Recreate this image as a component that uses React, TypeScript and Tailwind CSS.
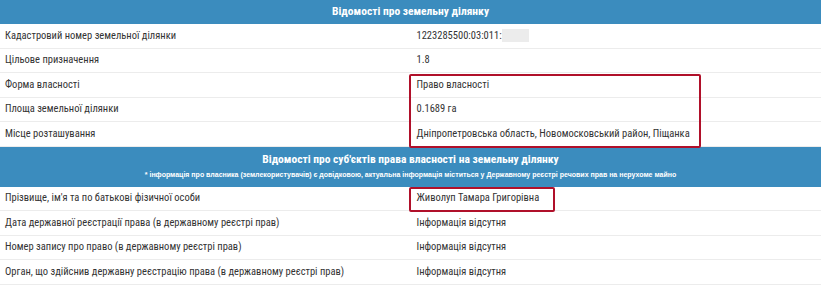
import React from "react";

interface Row {
  label: string;
  value: React.ReactNode;
}

const landRows: Row[] = [
  {
    label: "Кадастровий номер земельної ділянки",
    value: (
      <span className="flex items-center">
        1223285500:03:011:
        <span className="inline-block w-[27px] h-[13px] bg-[#ececec]" />
      </span>
    ),
  },
  { label: "Цільове призначення", value: "1.8" },
];

const boxedRows: Row[] = [
  { label: "Форма власності", value: "Право власності" },
  { label: "Площа земельної ділянки", value: "0.1689 га" },
  {
    label: "Місце розташування",
    value: "Дніпропетровська область, Новомосковський район, Піщанка",
  },
];

const ownerRows: Row[] = [
  {
    label: "Дата державної реєстрації права (в державному реєстрі прав)",
    value: "Інформація відсутня",
  },
  {
    label: "Номер запису про право (в державному реєстрі прав)",
    value: "Інформація відсутня",
  },
  {
    label: "Орган, що здійснив державну реєстрацію права (в державному реєстрі прав)",
    value: "Інформація відсутня",
  },
];

const Line: React.FC<{ row: Row }> = ({ row }) => (
  <div className="grid grid-cols-2 h-[24.5px] border-b border-[#ececec] items-center">
    <div className="pl-[5px] whitespace-nowrap">{row.label}</div>
    <div className="pl-[6px] whitespace-nowrap">{row.value}</div>
  </div>
);

const App: React.FC = () => {
  return (
    <div className="w-[821px] h-[287px] bg-white text-[10.5px] text-[#333] overflow-hidden font-['Roboto_Condensed','Liberation_Sans',sans-serif]">
      <div className="h-[24px] bg-[#3b8cbe] text-white font-bold text-[11.5px] flex items-center justify-center">
        Відомості про земельну ділянку
      </div>

      {landRows.map((r) => (
        <Line key={r.label} row={r} />
      ))}

      <div className="grid grid-cols-2">
        <div>
          {boxedRows.map((r) => (
            <div
              key={r.label}
              className="h-[24.5px] border-b border-[#ececec] flex items-center pl-[5px]"
            >
              {r.label}
            </div>
          ))}
        </div>
        <div className="relative">
          {boxedRows.map((r) => (
            <div
              key={r.label}
              className="h-[24.5px] border-b border-[#ececec] flex items-center pl-[6px] whitespace-nowrap"
            >
              {r.value}
            </div>
          ))}
          <div className="absolute left-[-2px] top-[1px] w-[292px] h-[74px] border-2 border-[#b0102a] rounded-[2px]" />
        </div>
      </div>

      <div className="bg-[#3b8cbe] text-white flex flex-col items-center pt-[3px] h-[40px]">
        <div className="text-[11.5px] font-bold leading-[18px]">
          Відомості про суб'єктів права власності на земельну ділянку
        </div>
        <div className="text-[7px] font-bold leading-[14px] font-['Liberation_Sans',sans-serif]">
          * інформація про власника (землекористувачів) є довідковою, актуальна інформація міститься у Державному реєстрі речових прав на нерухоме майно
        </div>
      </div>

      <div className="grid grid-cols-2 h-[24.5px] border-b border-[#ececec]">
        <div className="pl-[5px] flex items-center">Прізвище, ім'я та по батькові фізичної особи</div>
        <div className="pl-[6px] relative flex items-center">
          Живолуп Тамара Григорівна
          <div className="absolute left-[-2px] top-0 w-[146px] h-[25px] border-2 border-[#b0102a] rounded-[2px]" />
        </div>
      </div>

      {ownerRows.map((r) => (
        <Line key={r.label} row={r} />
      ))}
    </div>
  );
};

export default App;
